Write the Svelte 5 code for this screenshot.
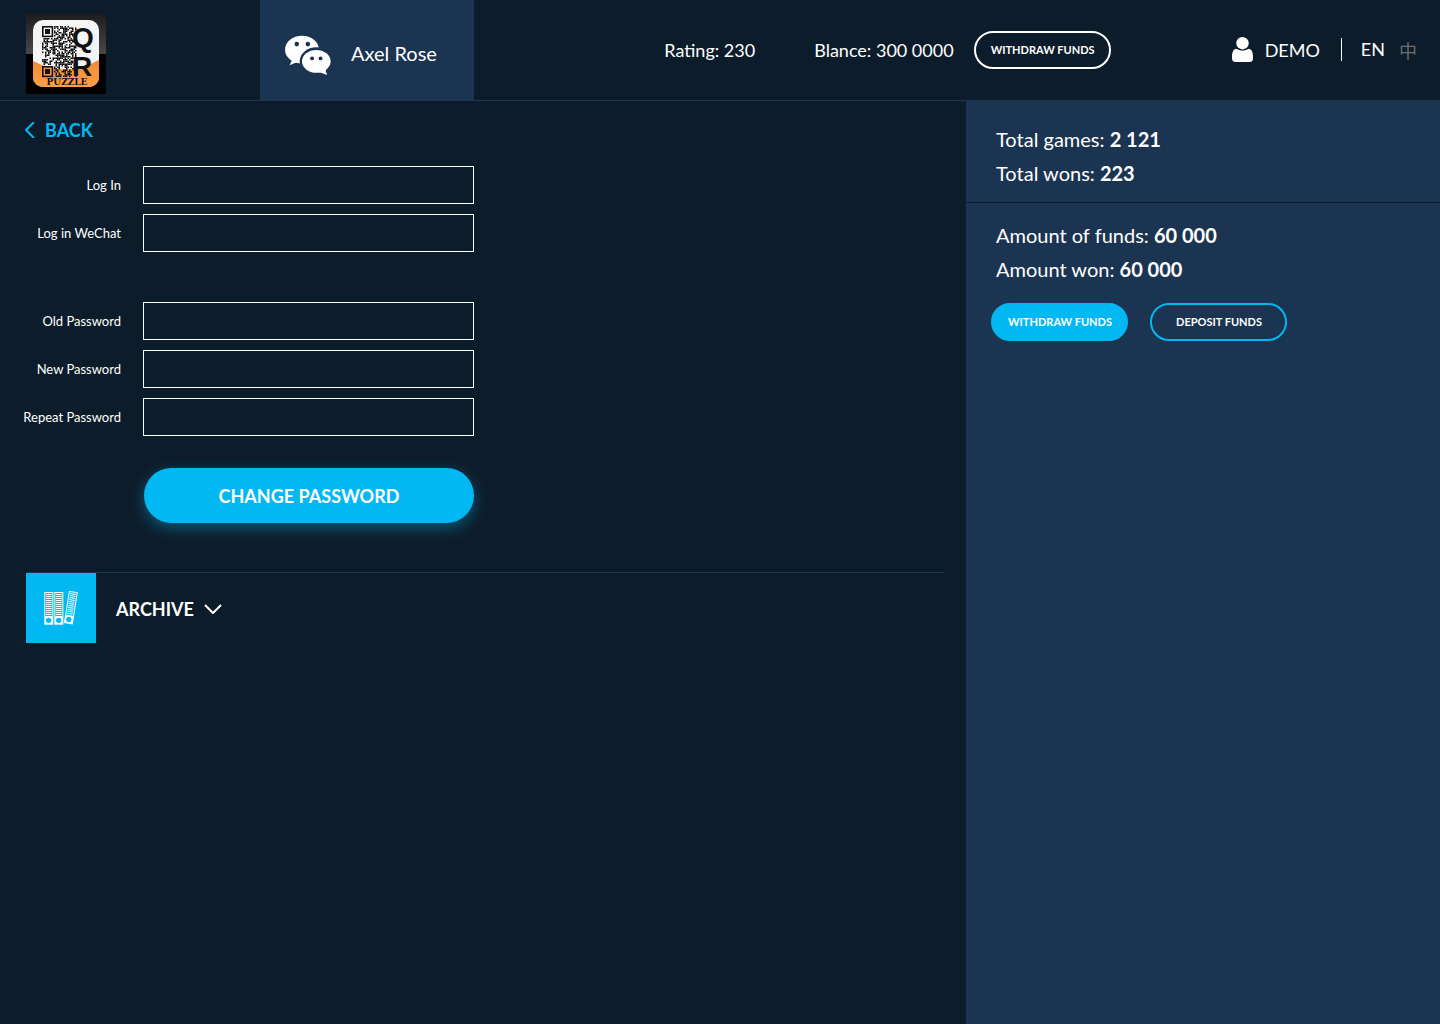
<script lang="ts">
  type Field = { id: string; label: string; type: string };

  const accountFields: Field[] = [
    { id: 'login', label: 'Log In', type: 'text' },
    { id: 'wechat', label: 'Log in WeChat', type: 'text' }
  ];

  const passwordFields: Field[] = [
    { id: 'old-password', label: 'Old Password', type: 'password' },
    { id: 'new-password', label: 'New Password', type: 'password' },
    { id: 'repeat-password', label: 'Repeat Password', type: 'password' }
  ];

  let values: Record<string, string> = $state({});
  let archiveOpen = $state(false);

  // modules of the QR part of the logo, corners are left free for the finder squares
  const cols = 23;
  const rows = 34;
  const modules: { x: number; y: number }[] = [];
  let seed = 29;
  for (let y = 0; y < rows; y++) {
    for (let x = 0; x < cols; x++) {
      seed = (seed * 1103515245 + 12345) % 2147483648;
      const corner = x < 8 && (y < 8 || y > 25);
      if (!corner && seed / 2147483648 > 0.5) {
        modules.push({ x: 16 + x * 1.5, y: 12 + y * 1.5 });
      }
    }
  }

  const folderLines = Array.from({ length: 12 }, (_, i) => 102 + i * 6);

  function handleSubmit(event: SubmitEvent) {
    event.preventDefault();
    values = {};
  }
</script>

{#snippet fieldRow(field: Field)}
  <div class="field">
    <label for={field.id}>{field.label}</label>
    <input id={field.id} type={field.type} bind:value={values[field.id]} />
  </div>
{/snippet}

<div class="page">
  <header class="header">
    <a class="logo" href="/" aria-label="QR Puzzle">
      <svg width="80" height="80" viewBox="0 0 80 80">
        <defs>
          <linearGradient id="logo-gloss" x1="0" y1="0" x2="0" y2="1">
            <stop offset="0" stop-color="#1d1d1d" />
            <stop offset="1" stop-color="#484848" />
          </linearGradient>
          <linearGradient id="logo-orange" x1="0" y1="0" x2="0" y2="1">
            <stop offset="0" stop-color="#f08a32" />
            <stop offset="1" stop-color="#ffa04a" />
          </linearGradient>
          <clipPath id="logo-tile">
            <rect x="7" y="6" width="66" height="67" rx="10" />
          </clipPath>
        </defs>
        <rect width="80" height="80" fill="#000" />
        <rect width="80" height="40" fill="url(#logo-gloss)" />
        <g clip-path="url(#logo-tile)">
          <rect x="7" y="6" width="66" height="67" fill="#f4f4f4" />
          <path d="M7 47 Q40 64 73 46 V73 H7 Z" fill="url(#logo-orange)" />
        </g>
        {#each modules as m}
          <rect x={m.x} y={m.y} width="1.5" height="1.5" fill="#111" />
        {/each}
        <g fill="none" stroke="#111" stroke-width="1.6">
          <rect x="16.8" y="12.8" width="9.6" height="9.6" />
          <rect x="16.8" y="52.8" width="9.6" height="9.6" />
        </g>
        <rect x="19" y="15" width="5" height="5" fill="#111" />
        <rect x="19" y="55" width="5" height="5" fill="#111" />
        <text class="logo-letter" x="46" y="33">Q</text>
        <text class="logo-letter" x="46" y="62">R</text>
        <text class="logo-name" x="41" y="71">PUZZLE</text>
      </svg>
    </a>

    <a class="profile" href="#profile">
      <svg width="46" height="40" viewBox="86 105 141 123">
        <path d="M108 180 L100 198 L124 188 Z" fill="#fff" />
        <ellipse cx="138" cy="150" rx="52" ry="43" fill="#fff" />
        <ellipse cx="182" cy="186" rx="51" ry="43" fill="#1b3451" />
        <ellipse cx="182" cy="186" rx="44" ry="35" fill="#fff" />
        <path d="M190 219 L215 228 L209 208 Z" fill="#fff" />
        <g fill="#1b3451">
          <circle cx="122" cy="133" r="7" />
          <circle cx="156" cy="133" r="7" />
          <circle cx="169" cy="177" r="6" />
          <circle cx="195" cy="177" r="6" />
        </g>
      </svg>
      <span class="profile-name">Axel Rose</span>
    </a>

    <div class="stats">
      <span>Rating: 230</span>
      <span class="balance">Blance: 300 0000</span>
      <button class="pill pill-white" type="button">WITHDRAW FUNDS</button>
    </div>

    <nav class="user">
      <a class="account" href="#account">
        <svg width="21" height="25" viewBox="0 0 21 25" fill="#fff">
          <circle cx="10.5" cy="6.2" r="6.2" />
          <path d="M4.5 11.8 C8 14.2 13 14.2 16.5 11.8 C19.5 12 21 15 21 20 V21.5 C21 24 19.5 25 17.5 25 H3.5 C1.5 25 0 24 0 21.5 V20 C0 15 1.5 12 4.5 11.8 Z" />
        </svg>
        <span>DEMO</span>
      </a>
      <a class="lang" href="#en">EN</a>
      <a class="lang-zh" href="#zh">中</a>
    </nav>
  </header>

  <div class="body">
    <main class="content">
      <a class="back" href="#back">
        <svg width="10" height="16" viewBox="0 0 10 16" fill="none" stroke="currentColor" stroke-width="2">
          <polyline points="9,0 1,8 9,16" />
        </svg>
        <span>BACK</span>
      </a>

      <form onsubmit={handleSubmit}>
        <div class="group">
          {#each accountFields as field}
            {@render fieldRow(field)}
          {/each}
        </div>
        <div class="group">
          {#each passwordFields as field}
            {@render fieldRow(field)}
          {/each}
        </div>
        <button class="submit" type="submit">CHANGE PASSWORD</button>
      </form>

      <section class="archive">
        <div class="archive-icon">
          <svg width="34" height="34" viewBox="84 93 102 102">
            <defs>
              <g id="folder">
                <rect x="85" y="96" width="27" height="98" fill="#fff" />
                <rect x="88" y="99" width="21" height="70" fill="#02b8f3" />
                {#each folderLines as y}
                  <rect x="90" {y} width="17" height="3" fill="#fff" />
                {/each}
                <circle cx="98" cy="181" r="8" fill="#02b8f3" />
              </g>
            </defs>
            <use href="#folder" />
            <use href="#folder" x="30" />
            <use href="#folder" transform="translate(66 -2) rotate(9 98 145)" />
          </svg>
        </div>
        <button
          class="archive-toggle"
          type="button"
          aria-expanded={archiveOpen}
          onclick={() => (archiveOpen = !archiveOpen)}
        >
          <span>ARCHIVE</span>
          <svg width="18" height="10" viewBox="0 0 18 10" fill="none" stroke="currentColor" stroke-width="2">
            <polyline points="1,1 9,9 17,1" />
          </svg>
        </button>
      </section>
    </main>

    <aside class="sidebar">
      <div class="summary games">
        <p>Total games: <b>2 121</b></p>
        <p>Total wons: <b>223</b></p>
      </div>
      <div class="summary funds">
        <p>Amount of funds: <b>60 000</b></p>
        <p>Amount won: <b>60 000</b></p>
      </div>
      <div class="actions">
        <button class="pill pill-blue" type="button">WITHDRAW FUNDS</button>
        <button class="pill" type="button">DEPOSIT FUNDS</button>
      </div>
    </aside>
  </div>
</div>

<style>
  :global(body) {
    background: #0d1c2a;
  }

  .page {
    display: flex;
    flex-direction: column;
    min-height: 100vh;
    background: #0d1c2a;
    color: #fff;
    font-family: Lato, sans-serif;
    font-size: 18px;
  }

  a {
    color: inherit;
    text-decoration: none;
  }

  button {
    font-family: inherit;
    color: #fff;
    cursor: pointer;
  }

  svg {
    display: block;
    flex-shrink: 0;
  }

  .header {
    display: flex;
    align-items: center;
    min-height: 100px;
    border-bottom: 1px solid #1b3451;
  }

  .logo {
    width: 234px;
    padding: 8px 0 0 26px;
  }

  .logo-letter {
    font: bold 28px "Liberation Sans", sans-serif;
    fill: #111;
  }

  .logo-name {
    font: bold 9px "DejaVu Serif", serif;
    fill: #111;
    text-anchor: middle;
  }

  .profile {
    display: flex;
    align-items: center;
    align-self: stretch;
    gap: 20px;
    box-sizing: border-box;
    width: 214px;
    padding: 10px 0 0 25px;
    background: #1b3451;
    font-size: 20px;
    white-space: nowrap;
  }

  .profile-name {
    padding-bottom: 4px;
  }

  .stats {
    display: flex;
    flex: 1;
    align-items: center;
    justify-content: flex-end;
    margin-right: 121px;
    white-space: nowrap;
  }

  .balance {
    margin: 0 20px 0 59px;
  }

  .pill {
    box-sizing: border-box;
    width: 137px;
    height: 38px;
    padding: 0 0 2px 1px;
    border: 2px solid #02b8f3;
    border-radius: 19px;
    background: none;
    font-size: 11px;
    font-weight: 700;
    white-space: nowrap;
  }

  .pill-white {
    border-color: #fff;
  }

  .pill-blue {
    background: #02b8f3;
  }

  .user {
    display: flex;
    align-items: center;
    padding: 0 23px 1px 0;
  }

  .account {
    display: flex;
    align-items: center;
    gap: 12px;
  }

  .lang {
    margin: 0 14px 0 21px;
    padding-left: 19px;
    border-left: 1px solid #fff;
    line-height: 23px;
  }

  .lang-zh {
    color: #6b6d70;
    font-family: "Noto Sans CJK SC", sans-serif;
    line-height: 20px;
  }

  .body {
    display: flex;
    flex: 1;
  }

  .content {
    flex: 1;
    min-width: 0;
    padding-top: 17px;
  }

  .back {
    display: flex;
    align-items: center;
    gap: 10px;
    width: fit-content;
    margin-left: 25px;
    color: #02b8f3;
    font-weight: 700;
    line-height: 24px;
  }

  form {
    display: flex;
    flex-direction: column;
    gap: 50px;
    width: 451px;
    margin: 24px 0 0 23px;
  }

  .group {
    display: flex;
    flex-direction: column;
    gap: 10px;
  }

  .field {
    display: flex;
    align-items: center;
    gap: 22px;
  }

  .field label {
    width: 98px;
    font-size: 13px;
    text-align: right;
    white-space: nowrap;
  }

  .field input {
    flex: 1;
    box-sizing: border-box;
    min-width: 0;
    height: 38px;
    padding: 0 10px;
    border: 1px solid #fff;
    border-radius: 0;
    background: transparent;
    color: #fff;
    font: 16px Lato, sans-serif;
  }

  .submit {
    align-self: flex-end;
    width: 330px;
    height: 55px;
    margin-top: -18px;
    border: none;
    border-radius: 28px;
    background: #02b8f3;
    box-shadow: 0 5px 15px rgba(2, 184, 243, 0.4);
    font-size: 18px;
    font-weight: 700;
  }

  .archive {
    display: flex;
    align-items: center;
    gap: 20px;
    margin: 49px 22px 0 26px;
    border-top: 1px solid #1b3451;
  }

  .archive-icon {
    display: flex;
    align-items: center;
    justify-content: center;
    width: 70px;
    height: 70px;
    background: #02b8f3;
  }

  .archive-toggle {
    display: flex;
    align-items: center;
    gap: 10px;
    padding: 2px 0 0;
    border: none;
    background: none;
    font-size: 18px;
    font-weight: 700;
  }

  .sidebar {
    width: 474px;
    background: #1b3451;
  }

  .summary {
    padding: 0 30px;
    font-size: 20px;
    line-height: 34px;
  }

  .summary p {
    margin: 0;
  }

  .games {
    padding-top: 21px;
    padding-bottom: 12px;
    border-bottom: 1px solid #0d1c2a;
  }

  .funds {
    padding-top: 15px;
  }

  .actions {
    display: flex;
    gap: 22px;
    padding: 17px 25px;
  }
</style>
